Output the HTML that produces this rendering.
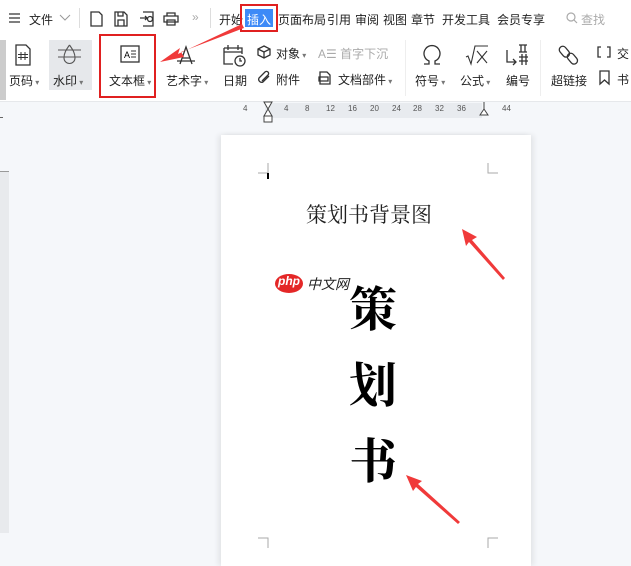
<!DOCTYPE html>
<html><head><meta charset="utf-8"><style>
*{margin:0;padding:0;box-sizing:border-box}
body{width:631px;height:566px;overflow:hidden;background:#f5f7fa;font-family:"Liberation Sans","Noto Sans CJK SC",sans-serif;position:relative;color:#222}
.a{position:absolute;white-space:nowrap}
.t{font-size:12px;color:#222}
.g{color:#aaa}
svg{position:absolute;overflow:visible}
.ic{fill:none;stroke:#333;stroke-width:1.3}
.dr{font-size:8px;color:#555;position:absolute;top:104px}
</style></head><body>
<div class="a" style="left:0;top:0;width:631px;height:36px;background:#fff"></div>
<div class="a" style="left:0;top:36px;width:631px;height:66px;background:#fff;border-bottom:1px solid #e6e8eb"></div>
<svg style="left:9px;top:13px" width="12" height="10"><path d="M0 1H11M0 5H11M0 9H11" class="ic"/></svg>
<div class="a t" style="left:29px;top:11px">文件</div>
<svg style="left:60px;top:15px" width="10" height="6"><path d="M0 0L5 5L10 0" fill="none" stroke="#999"/></svg>
<div class="a" style="left:79px;top:8px;width:1px;height:20px;background:#ddd"></div>
<svg style="left:90px;top:11px" width="14" height="16"><path d="M1 1H9L12 4V15H1Z" class="ic"/></svg>
<svg style="left:114px;top:11px" width="14" height="16"><path d="M1 1H10L13 4V15H1ZM4 15V9H10V15M4 1V5H9V1" class="ic"/></svg>
<svg style="left:139px;top:11px" width="16" height="16"><path d="M4 1H14V15H4M1 7H8M6 5L8 7L6 9" class="ic"/><circle cx="11" cy="8" r="2.5" class="ic"/></svg>
<svg style="left:163px;top:12px" width="16" height="14"><path d="M4 4V1H12V4M1 4H15V10H1ZM4 8H12V13H4Z" class="ic"/></svg>
<div class="a g" style="left:192px;top:10px;font-size:12px">»</div>
<div class="a" style="left:210px;top:8px;width:1px;height:20px;background:#ddd"></div>
<div class="a t" style="left:219px;top:11px">开始</div>
<div class="a" style="left:240px;top:4px;width:38px;height:28px;border:2px solid #e02020"></div>
<div class="a" style="left:245px;top:9px;width:28px;height:18px;background:#3d8af7"></div>
<div class="a t" style="left:247px;top:11px;color:#fff">插入</div>
<div class="a t" style="left:278px;top:11px">页面布局</div>
<div class="a t" style="left:327px;top:11px">引用</div>
<div class="a t" style="left:355px;top:11px">审阅</div>
<div class="a t" style="left:383px;top:11px">视图</div>
<div class="a t" style="left:411px;top:11px">章节</div>
<div class="a t" style="left:442px;top:11px">开发工具</div>
<div class="a t" style="left:497px;top:11px">会员专享</div>
<svg style="left:566px;top:12px" width="12" height="12"><circle cx="5" cy="5" r="4" fill="none" stroke="#aaa" stroke-width="1.2"/><path d="M8 8L11 11" stroke="#aaa" stroke-width="1.2"/></svg>
<div class="a t g" style="left:581px;top:11px">查找</div>
<div class="a" style="left:0;top:40px;width:6px;height:60px;background:#ccc"></div>
<div class="a" style="left:49px;top:40px;width:43px;height:50px;background:#e6e8eb"></div>
<svg style="left:15px;top:44px" width="16" height="22"><path d="M1 1H11L15 5V21H1Z" class="ic"/><path d="M6 8V16M10 8V16M3 10.5H13M3 13.5H13" stroke="#333" stroke-width="1"/></svg>
<div class="a t" style="left:9px;top:72px">页码<span style="font-size:8px;color:#777"> ▾</span></div>
<svg style="left:58px;top:44px" width="24" height="24"><path d="M0 6H23M0 13H23M11.5 1C8 6 6 9 6 14A5.5 5.5 0 0 0 17 14C17 9 15 6 11.5 1" fill="none" stroke="#555" stroke-width="1.1"/></svg>
<div class="a t" style="left:53px;top:72px">水印<span style="font-size:8px;color:#777"> ▾</span></div>
<div class="a" style="left:99px;top:34px;width:57px;height:64px;border:2px solid #e02020"></div>
<svg style="left:120px;top:45px" width="20" height="18"><rect x="1" y="1" width="18" height="16" class="ic"/><text x="4" y="13" font-size="9" font-family="Liberation Sans">A</text><path d="M11 6H16M11 9H16M11 12H16" stroke="#333"/></svg>
<div class="a t" style="left:109px;top:72px">文本框<span style="font-size:8px;color:#777"> ▾</span></div>
<svg style="left:175px;top:44px" width="22" height="22"><path d="M5 20L11 3L17 20M7 14H15M2 17H20" class="ic"/></svg>
<div class="a t" style="left:166px;top:72px">艺术字<span style="font-size:8px;color:#777"> ▾</span></div>
<svg style="left:223px;top:44px" width="24" height="24"><path d="M1 4H19V10M1 4V20H10M1 8H19M5 1V6M15 1V6" class="ic"/><circle cx="17" cy="17" r="5" class="ic"/><path d="M17 14V17H19" class="ic"/></svg>
<div class="a t" style="left:223px;top:72px">日期</div>
<svg style="left:257px;top:45px" width="14" height="14"><path d="M7 1L13 4V10L7 13L1 10V4ZM1 4L7 7L13 4M7 7V13" class="ic"/></svg>
<div class="a t" style="left:276px;top:45px">对象<span style="font-size:8px;color:#777"> ▾</span></div>
<svg style="left:257px;top:70px" width="14" height="14"><path d="M12 6L6 12A3 3 0 0 1 2 8L8 2A2 2 0 0 1 11 5L5 11" class="ic"/></svg>
<div class="a t" style="left:276px;top:71px">附件</div>
<div class="a t g" style="left:318px;top:45px">A☰ 首字下沉</div>
<svg style="left:318px;top:71px" width="14" height="14"><path d="M2 1H9L12 4V13H2ZM1 6H10V10H1Z" class="ic"/></svg>
<div class="a t" style="left:338px;top:71px">文档部件<span style="font-size:8px;color:#777"> ▾</span></div>
<div class="a" style="left:405px;top:40px;width:1px;height:56px;background:#eee"></div>
<svg style="left:421px;top:45px" width="22" height="20"><path d="M3 19H8V16A8 8 0 1 1 14 16V19H19" class="ic"/></svg>
<div class="a t" style="left:415px;top:72px">符号<span style="font-size:8px;color:#777"> ▾</span></div>
<svg style="left:465px;top:45px" width="24" height="20"><path d="M1 12L3 11L6 19L10 1H23M12 6L22 18M22 6L12 18" fill="none" stroke="#333" stroke-width="1.1"/></svg>
<div class="a t" style="left:460px;top:72px">公式<span style="font-size:8px;color:#777"> ▾</span></div>
<svg style="left:505px;top:44px" width="26" height="22"><path d="M14 1H22M14 8H22M16 1V8M20 1V8M14 13H23M14 17H23M17 10V21M21 10V21M2 6V18H11M8 15L11 18L8 21" class="ic"/></svg>
<div class="a t" style="left:506px;top:72px">编号</div>
<div class="a" style="left:540px;top:40px;width:1px;height:56px;background:#eee"></div>
<svg style="left:558px;top:45px" width="22" height="22"><rect x="3" y="1" width="7" height="12" rx="3.5" transform="rotate(-40 6 7)" class="ic"/><rect x="11" y="8" width="7" height="12" rx="3.5" transform="rotate(-40 14 14)" class="ic"/></svg>
<div class="a t" style="left:551px;top:72px">超链接</div>
<svg style="left:597px;top:46px" width="14" height="12"><path d="M4 1H1V11H4M10 1H13V11H10" class="ic"/></svg>
<div class="a t" style="left:617px;top:45px">交</div>
<svg style="left:599px;top:70px" width="12" height="15"><path d="M1 1H10V14L5.5 10L1 14Z" class="ic"/></svg>
<div class="a t" style="left:617px;top:71px">书</div>
<!-- ruler -->
<div class="a" style="left:265px;top:103px;width:217px;height:15px;background:#e8ebef"></div>
<div class="dr" style="left:243px">4</div>
<div class="dr" style="left:284px">4</div>
<div class="dr" style="left:305px">8</div>
<div class="dr" style="left:326px">12</div>
<div class="dr" style="left:348px">16</div>
<div class="dr" style="left:370px">20</div>
<div class="dr" style="left:392px">24</div>
<div class="dr" style="left:413px">28</div>
<div class="dr" style="left:435px">32</div>
<div class="dr" style="left:457px">36</div>
<div class="dr" style="left:502px">44</div>
<svg style="left:263px;top:101px" width="10" height="22"><path d="M1 1H9L5 8L9 15H1L5 8Z" fill="#fff" stroke="#444"/><rect x="1" y="15" width="8" height="6" fill="#fff" stroke="#444"/></svg>
<svg style="left:479px;top:101px" width="10" height="16"><path d="M5 1V8M1 14L5 8L9 14Z" fill="#fff" stroke="#444"/></svg>
<div class="a" style="left:0;top:171px;width:9px;height:362px;background:#e8eaed;border-top:1px solid #999"></div>
<div class="a" style="left:0;top:117px;width:3px;height:1px;background:#666"></div>
<!-- page -->
<div class="a" style="left:221px;top:135px;width:310px;height:431px;background:#fff;box-shadow:-3px 0 5px rgba(0,0,0,0.07),3px 0 5px rgba(0,0,0,0.07)"></div>
<svg style="left:258px;top:163px" width="240" height="385"><path d="M10 0V10H0M230 0V10H240M0 375H10V385M240 375H230V385" fill="none" stroke="#aaa"/></svg>
<div class="a" style="left:267px;top:173px;width:2px;height:6px;background:#000"></div>
<div class="a" style="left:306px;top:199px;font-family:'Noto Serif CJK SC',serif;font-size:21px;color:#222">策划书背景图</div>
<div class="a" style="left:275px;top:274px;width:28px;height:19px;border-radius:50%;background:#e42727"></div>
<div class="a" style="left:278px;top:274px;font-size:12px;font-style:italic;color:#fff;font-weight:bold">php</div>
<div class="a" style="left:307px;top:274px;font-size:14px;font-style:italic;color:#222">中文网</div>
<div class="a" style="left:349px;top:268px;font-family:'Noto Serif CJK SC',serif;font-weight:bold;font-size:48px;line-height:76px;color:#000">策<br>划<br>书</div>
<svg style="left:0;top:0" width="631" height="566"><g fill="#f03a3a">
<path d="M242 24L178 54L180 48L160 62L184 57L181 52L244 28Z"/>
<path d="M505 278L472 240L477 237L462 229L466 246L469 242L503 280Z"/>
<path d="M460 522L418 484L422 481L406 475L413 491L416 487L458 524Z"/>
</g></svg>
</body></html>
